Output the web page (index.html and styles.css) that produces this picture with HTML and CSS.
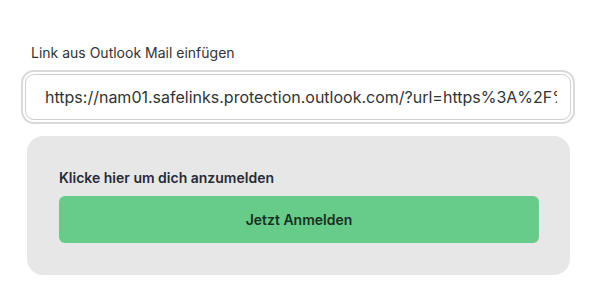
FILE: index.html
```html
<!DOCTYPE html>
<html lang="de">
<head>
<meta charset="utf-8">
<link rel="stylesheet" href="styles.css">
</head>
<body>
<main class="page">
  <label class="field-label" for="link">Link aus Outlook Mail einfügen</label>
  <div class="input-wrap">
    <input id="link" class="link-input" type="text" value="https://nam01.safelinks.protection.outlook.com/?url=https%3A%2F%2Fexample.com">
  </div>
  <section class="card">
    <p class="card-title">Klicke hier um dich anzumelden</p>
    <button class="login-btn" type="button">Jetzt Anmelden</button>
  </section>
</main>
</body>
</html>
```
FILE: styles.css
```css
html, body {
  margin: 0;
  padding: 0;
  background: #ffffff;
}
body {
  font-family: Inter, "Noto Sans", sans-serif;
  color: #2b2b2b;
}
.page {
  width: 613px;
  height: 305px;
  box-sizing: border-box;
  padding: 44px 42px 0 25px;
  display: flex;
  flex-direction: column;
}
.field-label {
  font-size: 14px;
  line-height: 18px;
  color: #333333;
  margin-left: 6px;
  margin-bottom: 12px;
}
.input-wrap {
  display: flex;
}
.link-input {
  flex: 1;
  height: 46px;
  box-sizing: border-box;
  border: 1px solid #cfcfcf;
  border-radius: 9px;
  padding: 0 13px 0 19px;
  font-family: Inter, "Noto Sans", sans-serif;
  font-size: 16px;
  color: #333333;
  background: #fff;
  outline: none;
  box-shadow: 0 0 0 2px #ffffff, 0 0 0 4px #d9d9d9;
}
.card {
  margin: 16px 1px 0 2px;
  background: #e7e7e7;
  border-radius: 16px;
  padding: 32px 31px 32px 32px;
  display: flex;
  flex-direction: column;
}
.card-title {
  margin: 0 0 8px;
  font-size: 14px;
  line-height: 20px;
  font-weight: 600;
  color: #272b36;
}
.login-btn {
  height: 47px;
  border: none;
  border-radius: 6px;
  background: #67cc89;
  font-family: Inter, "Noto Sans", sans-serif;
  font-size: 14px;
  font-weight: 600;
  color: #17301f;
  cursor: pointer;
}
```
